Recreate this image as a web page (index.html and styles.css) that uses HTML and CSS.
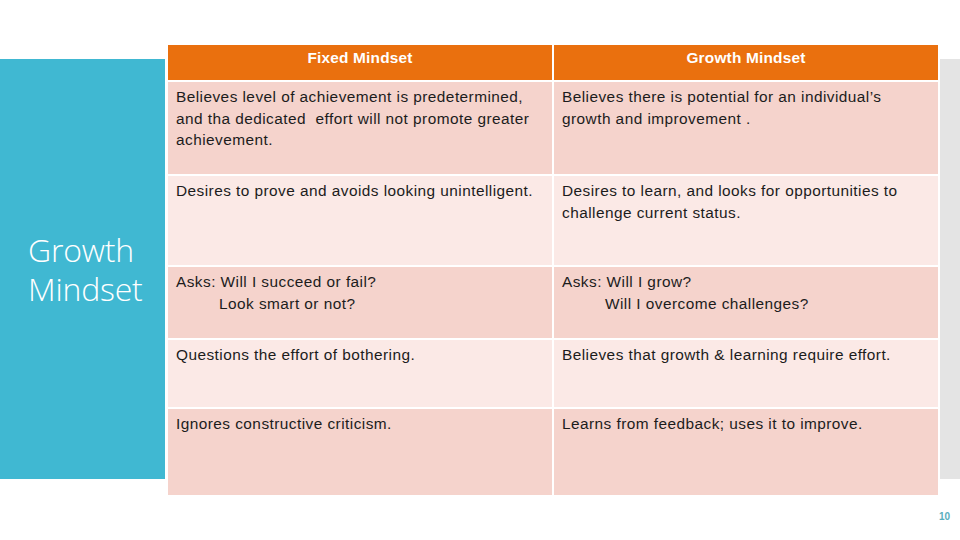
FILE: index.html
```html
<!DOCTYPE html>
<html lang="en">
<head>
  <meta charset="UTF-8">
  <title>Growth Mindset</title>
  <link rel="stylesheet" href="styles.css">
</head>
<body>

  <div class="slide">
    <div class="stage">
      <div class="side-title">
        <h1>Growth<br>Mindset</h1>
      </div>

      <!-- comparison table -->
      <table class="compare">
        <tr class="head">
          <th>Fixed Mindset</th>
          <th>Growth Mindset</th>
        </tr>
        <tr class="dark r1">
          <td>Believes level of achievement is predetermined,<br>and tha dedicated&nbsp; effort will not promote greater<br>achievement.</td>
          <td>Believes there is potential for an individual’s<br>growth and improvement .</td>
        </tr>
        <tr class="light r2">
          <td>Desires to prove and avoids looking unintelligent.</td>
          <td>Desires to learn, and looks for opportunities to<br>challenge current status.</td>
        </tr>
        <tr class="dark r3">
          <td>Asks: Will I succeed or fail?<br><span class="indent">Look smart or not?</span></td>
          <td>Asks: Will I grow?<br><span class="indent">Will I overcome challenges?</span></td>
        </tr>
        <tr class="light r4">
          <td>Questions the effort of bothering.</td>
          <td>Believes that growth &amp; learning require effort.</td>
        </tr>
        <tr class="dark r5">
          <td>Ignores constructive criticism.</td>
          <td>Learns from feedback; uses it to improve.</td>
        </tr>
      </table>
    </div>

    <div class="page-num">10</div>
  </div>

</body>
</html>
```

FILE: styles.css
```css
body {
  margin: 0;
  font-family: 'Liberation Sans', Arial, sans-serif;
  color: #1c1c1c;
  background-color: #fff;
}

.slide {
  width: 960px;
  height: 540px;
  display: flex;
  flex-direction: column;
  background: linear-gradient(to right, #40b8d2 165px, #fff 165px, #fff 166px, #e4e4e4 166px) 0 59px / 100% 420px no-repeat;
}

.stage {
  display: grid;
  grid-template-columns: 166px 774px;
  padding-top: 43px;
}

.side-title {
  height: 420px;
  margin-top: 16px;
  display: flex;
  align-items: center;
  padding-left: 28px;
}

.side-title h1 {
  margin: 0;
  font-family: 'Open Sans', 'Liberation Sans', sans-serif;
  font-weight: 300;
  font-size: 32px;
  line-height: 39px;
  color: #fff;
  letter-spacing: -0.2px;
}

.compare {
  width: 100%;
  border-collapse: collapse;
  table-layout: fixed;
  font-size: 15.4px;
  line-height: 21.5px;
  letter-spacing: 0.45px;
}

.compare th,
.compare td {
  border: 2px solid #fff;
  padding: 4px 8px 0 8px;
  vertical-align: top;
  text-align: left;
  white-space: nowrap;
}

.compare th {
  padding-top: 2px;
  background-color: #ea700e;
  color: #fff;
  font-weight: bold;
  text-align: center;
  letter-spacing: 0.2px;
}

.head { height: 37px; }
.r1 { height: 94px; }
.r2 { height: 91px; }
.r3 { height: 73px; }
.r4 { height: 69px; }
.r5 { height: 88px; }

.dark td {
  background-color: #f5d3cc;
}

.light td {
  background-color: #fbe9e6;
}

.indent {
  padding-left: 43px;
}

.page-num {
  margin-top: auto;
  padding: 0 10px 18px 0;
  text-align: right;
  font-size: 10px;
  font-weight: bold;
  color: #5aaebd;
}
```
